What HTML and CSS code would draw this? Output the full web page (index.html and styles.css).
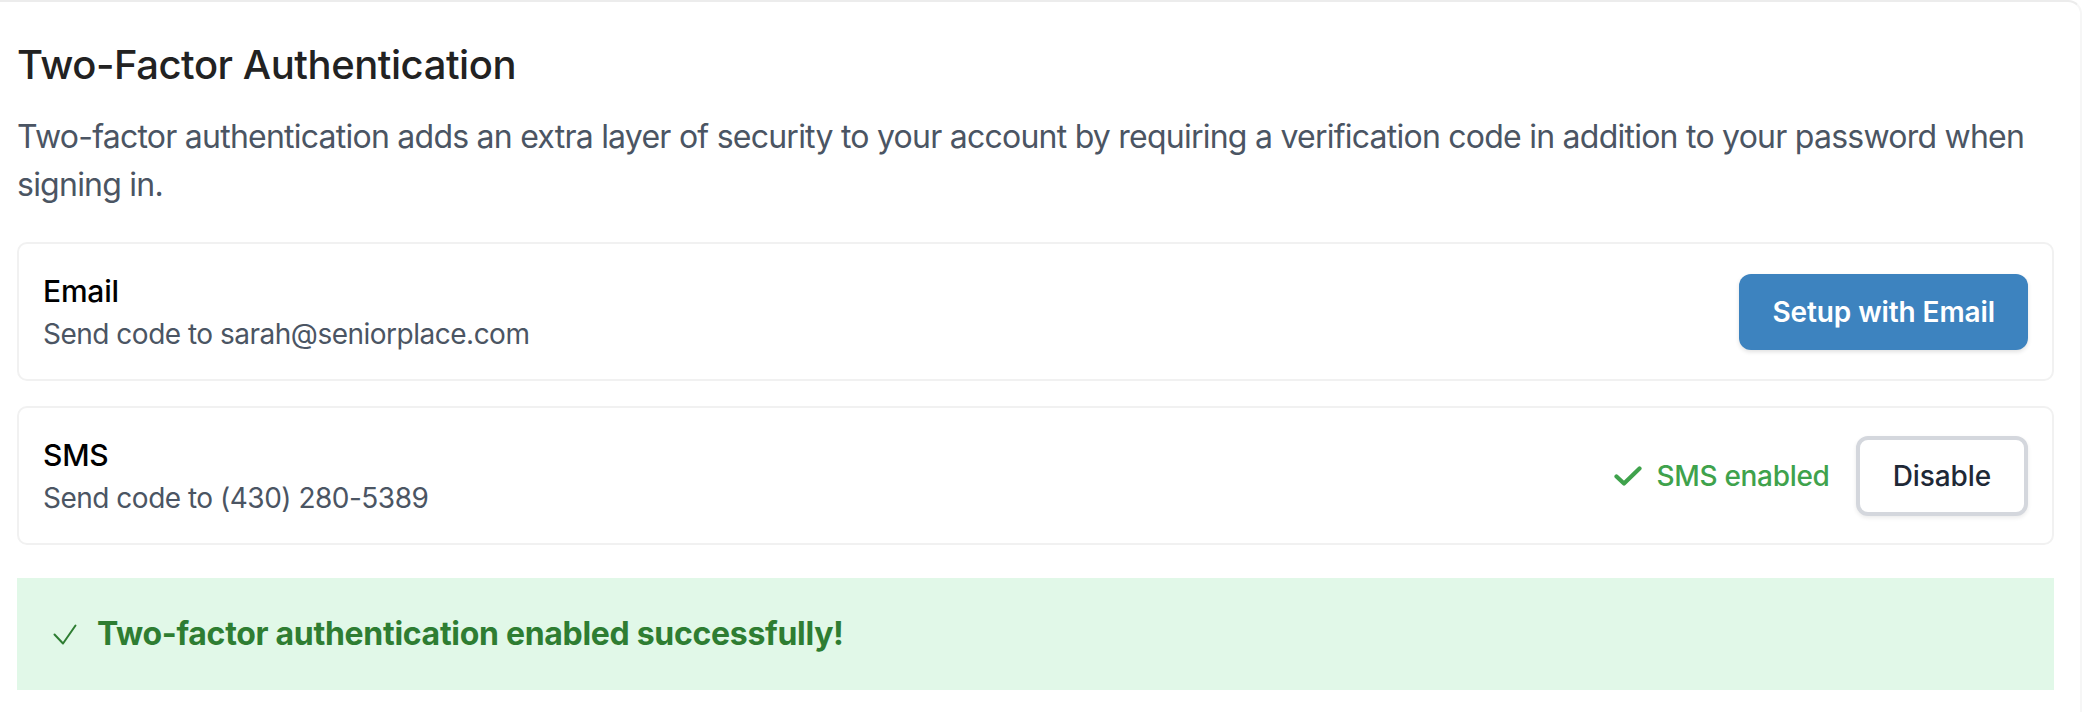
FILE: index.html
```html
<!DOCTYPE html>
<html lang="en">
<head>
<meta charset="utf-8">
<title>Two-Factor Authentication</title>
<link rel="stylesheet" href="styles.css">
</head>
<body>
<div class="panel">
  <h2 class="title">Two-Factor Authentication</h2>
  <p class="intro">Two-factor authentication adds an extra layer of security to your account by requiring a verification code in addition to your password when signing in.</p>

  <div class="method">
    <div class="method-info">
      <div class="method-name">Email</div>
      <div class="method-desc">Send code to sarah@seniorplace.com</div>
    </div>
    <div class="method-actions">
      <button class="btn btn-primary">Setup with Email</button>
    </div>
  </div>

  <div class="method">
    <div class="method-info">
      <div class="method-name">SMS</div>
      <div class="method-desc">Send code to (430) 280-5389</div>
    </div>
    <div class="method-actions">
      <span class="status">
        <svg class="status-icon" viewBox="0 0 28 20" width="28" height="20" aria-hidden="true"><path d="M2.5 10.5 L10 17.5 L25.5 2.5" fill="none" stroke="currentColor" stroke-width="4.2" stroke-linecap="round" stroke-linejoin="round"/></svg>
        SMS enabled
      </span>
      <button class="btn btn-outline">Disable</button>
    </div>
  </div>

  <div class="alert">
    <svg class="alert-icon" viewBox="0 0 24 21" width="24" height="21" aria-hidden="true"><path d="M1.5 10.5 L10 19.5 L22.5 1.5" fill="none" stroke="currentColor" stroke-width="2" stroke-linecap="round" stroke-linejoin="round"/></svg>
    <span class="alert-text">Two-factor authentication enabled successfully!</span>
  </div>
</div>
</body>
</html>
```

FILE: styles.css
```css
html, body {
  margin: 0;
  padding: 0;
  background: #ffffff;
}

body {
  font-family: Inter, "Liberation Sans", sans-serif;
  color: #111827;
}

.panel {
  box-sizing: border-box;
  width: 2082px;
  min-height: 712px;
  border-top: 2px solid #ececec;
  border-right: 2px solid #f6f6f6;
  border-top-right-radius: 14px;
  padding: 35px 26px 0 17px;
}

.title {
  margin: 0;
  font-size: 40px;
  line-height: 56px;
  font-weight: 500;
  color: #222222;
  letter-spacing: -0.45px;
}

.intro {
  margin: 20px 0 33px;
  font-size: 32px;
  line-height: 48px;
  color: #4b5563;
  letter-spacing: -0.76px;
}

.method {
  display: flex;
  align-items: center;
  justify-content: space-between;
  border: 2px solid #f1f1f1;
  border-radius: 10px;
  padding: 26px 24px 25px;
  margin-bottom: 25px;
}

.method-name {
  font-size: 30px;
  line-height: 42px;
  font-weight: 500;
  color: #000000;
  letter-spacing: -0.2px;
}

.method-desc {
  margin-top: 2px;
  font-size: 28px;
  line-height: 40px;
  color: #4b5563;
  letter-spacing: -0.5px;
}

.method-actions {
  display: flex;
  align-items: center;
  gap: 26px;
}

.status {
  display: flex;
  align-items: center;
  gap: 14px;
  font-size: 28px;
  line-height: 40px;
  font-weight: 500;
  color: #3fa24c;
  letter-spacing: -0.3px;
}

.status-icon {
  display: block;
}

.btn {
  font-family: inherit;
  font-size: 28px;
  line-height: 40px;
  margin: 0;
  cursor: pointer;
  letter-spacing: -0.1px;
}

.btn-primary {
  height: 76px;
  padding: 0 33px;
  border: none;
  border-radius: 12px;
  background: #3d83bf;
  color: #ffffff;
  font-weight: 600;
  box-shadow: 0 2px 4px rgba(0, 0, 0, 0.12);
}

.btn-outline {
  height: 80px;
  padding: 0 33px;
  border: 4px solid #d4d7dd;
  border-radius: 12px;
  background: #ffffff;
  color: #1f2937;
  font-weight: 500;
  box-shadow: 0 2px 4px rgba(0, 0, 0, 0.08);
}

.alert {
  display: flex;
  align-items: center;
  gap: 20px;
  margin-top: 33px;
  padding: 32px 36px;
  background: #e1f8e8;
  color: #2e7d32;
}

.alert-icon {
  display: block;
}

.alert-text {
  font-size: 32px;
  line-height: 48px;
  font-weight: 700;
  letter-spacing: -0.3px;
}
```
